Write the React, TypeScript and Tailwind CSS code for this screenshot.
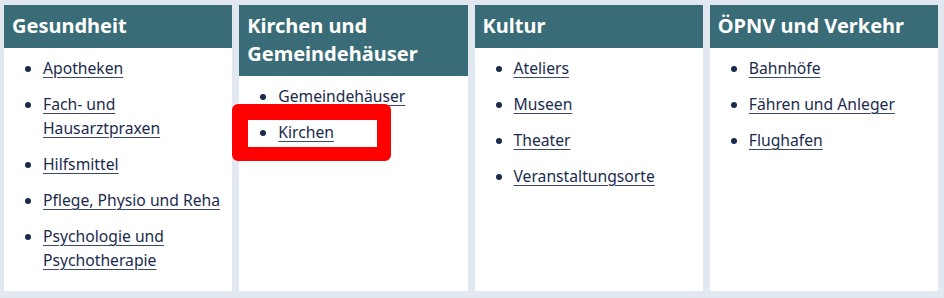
import React from "react";

const cards: { title: string[]; items: string[][] }[] = [
  {
    title: ["Gesundheit"],
    items: [
      ["Apotheken"],
      ["Fach- und", "Hausarztpraxen"],
      ["Hilfsmittel"],
      ["Pflege, Physio und Reha"],
      ["Psychologie und", "Psychotherapie"],
    ],
  },
  {
    title: ["Kirchen und", "Gemeindehäuser"],
    items: [["Gemeindehäuser"], ["Kirchen"]],
  },
  {
    title: ["Kultur"],
    items: [["Ateliers"], ["Museen"], ["Theater"], ["Veranstaltungsorte"]],
  },
  {
    title: ["ÖPNV und Verkehr"],
    items: [["Bahnhöfe"], ["Fähren und Anleger"], ["Flughafen"]],
  },
];

export default function App() {
  return (
    <div
      className="relative w-[944px] h-[298px] bg-[#e2e8f0] flex gap-[7px] pl-[4px] pr-[6px] pt-[5px] pb-[7px]"
      style={{ fontFamily: '"Noto Sans", "Open Sans", sans-serif' }}
    >
      {cards.map((c, i) => (
        <div key={i} className="flex-1 bg-white flex flex-col">
          <div className="bg-[#396c76] text-white font-bold text-[20px] leading-[28px] px-[8px] pt-[7px] pb-[8px]">
            {c.title.map((t, j) => (
              <div key={j}>{t}</div>
            ))}
          </div>
          <ul className="list-disc pl-[39px] pt-[8px] flex flex-col gap-[12px] text-[15.7px] leading-[24px] text-[#1b2b4d] marker:text-[#1b2b4d]">
            {c.items.map((it, j) => (
              <li key={j}>
                <a href="#" className="underline decoration-[1px] underline-offset-[3px] decoration-[#3b4a66]">
                  {it.map((l, k) => (
                    <React.Fragment key={k}>
                      {k > 0 && <br />}
                      {l}
                    </React.Fragment>
                  ))}
                </a>
              </li>
            ))}
          </ul>
        </div>
      ))}
      <div className="absolute left-[232px] top-[104px] w-[159px] h-[57px] rounded-[6px] border-[#ff0000] border-l-[16px] border-r-[14px] border-t-[16px] border-b-[14px]" />
    </div>
  );
}
